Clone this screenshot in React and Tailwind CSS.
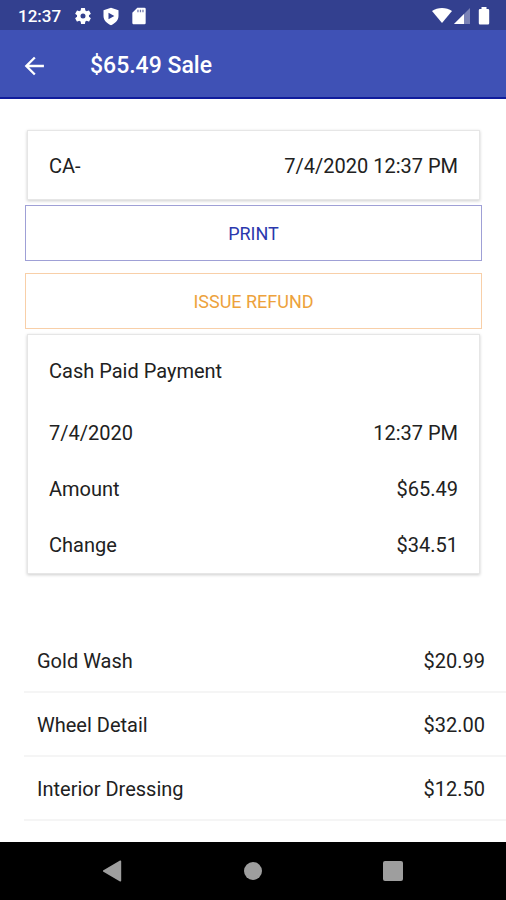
import React from "react";

const payment = [
  ["7/4/2020", "12:37 PM"],
  ["Amount", "$65.49"],
  ["Change", "$34.51"],
];

const items = [
  ["Gold Wash", "$20.99"],
  ["Wheel Detail", "$32.00"],
  ["Interior Dressing", "$12.50"],
];

function StatusBar() {
  return (
    <div className="flex h-[30px] items-center bg-[#33408f] pt-0.5 pr-4 pl-[18px] text-white">
      <span className="text-[17px] leading-5 font-medium">12:37</span>
      <div className="ml-3 flex flex-1 items-center gap-2">
        <svg className="size-5" viewBox="0 0 24 24" fill="currentColor" aria-hidden="true">
          <path d="M19.14 12.94c.04-.3.06-.61.06-.94 0-.32-.02-.64-.07-.94l2.03-1.58a.49.49 0 0 0 .12-.61l-1.92-3.32a.49.49 0 0 0-.59-.22l-2.39.96c-.5-.38-1.03-.7-1.62-.94l-.36-2.54a.48.48 0 0 0-.48-.41h-3.84a.47.47 0 0 0-.47.41l-.36 2.54c-.59.24-1.13.57-1.62.94l-2.39-.96a.48.48 0 0 0-.59.22L2.74 8.87a.48.48 0 0 0 .12.61l2.03 1.58c-.05.3-.09.63-.09.94s.02.64.07.94l-2.03 1.58a.49.49 0 0 0-.12.61l1.92 3.32c.12.22.37.29.59.22l2.39-.96c.5.38 1.03.7 1.62.94l.36 2.54c.05.24.24.41.48.41h3.84c.24 0 .44-.17.47-.41l.36-2.54c.59-.24 1.13-.56 1.62-.94l2.39.96c.22.08.47 0 .59-.22l1.92-3.32a.47.47 0 0 0-.12-.61zM12 15a3 3 0 1 1 0-6 3 3 0 0 1 0 6z" />
        </svg>
        <svg className="size-5" viewBox="0 0 24 24" fill="currentColor" aria-hidden="true">
          <path fillRule="evenodd" d="M12 2 3 5v7c0 5 3.800 8.800 9 11 5.200-2.200 9-6 9-11V5zM9 8v8l7-4z" />
        </svg>
        <svg className="size-5" viewBox="0 0 24 24" fill="currentColor" aria-hidden="true">
          <path d="M18.500 2H10L4 8v12c0 1.100.9 2 2 2h12.500a1.500 1.500 0 0 0 1.500-1.500v-17A1.500 1.500 0 0 0 18.500 2z" />
          <path d="M10 4.500h1.500v3H10zM13 4.500h1.500v3H13zM16 4.500h1.500v3H16z" fill="#7078ac" />
        </svg>
      </div>
      <div className="flex items-center">
        <svg className="h-[18px] w-5" viewBox="0 0 20 18" fill="currentColor" aria-hidden="true">
          <path d="M0 4C5.500 0 14.500 0 20 4L10 16z" />
        </svg>
        <svg className="ml-0.5 size-4" viewBox="0 0 16 16" fill="currentColor" aria-hidden="true">
          <path d="M0 16 16 0v16z" opacity=".35" />
          <path d="M0 16 10 6v10z" />
        </svg>
        <svg className="ml-2 h-[18px] w-3" viewBox="0 0 12 18" fill="currentColor" aria-hidden="true">
          <path d="M3.500 0h5v2H10a1.200 1.200 0 0 1 1.200 1.200v13.100a1.200 1.200 0 0 1-1.200 1.200H2A1.200 1.200 0 0 1 .8 16.300V3.200A1.200 1.200 0 0 1 2 2h1.500z" />
        </svg>
      </div>
    </div>
  );
}

function AppBar() {
  return (
    <header className="flex h-[69px] items-center border-b-2 border-[#101c9c] bg-[#3f51b5] pt-1 pl-5 text-white">
      <button type="button" aria-label="Back" className="flex size-7 items-center justify-center">
        <svg className="size-7" viewBox="0 0 24 24" fill="currentColor" aria-hidden="true">
          <path d="M20.500 11H7.830l5.590-5.590L12 4l-8 8 8 8 1.410-1.410L7.830 13H20.500z" />
        </svg>
      </button>
      <h1 className="ml-[42px] text-[23px] leading-8 font-medium">$65.49 Sale</h1>
    </header>
  );
}

function Card({ children }) {
  return (
    <section className="mx-[3px] border border-[#e6e6e6] bg-white px-[21px] pt-0.5 shadow-[0_1px_3px_rgba(0,0,0,0.2)]">
      {children}
    </section>
  );
}

function NavBar() {
  return (
    <nav className="flex h-[58px] items-center justify-center gap-[100px] bg-black text-[#9e9e9e]">
      <button type="button" aria-label="Back" className="flex size-10 items-center justify-center">
        <svg className="h-[22px] w-5" viewBox="0 0 20 22" fill="currentColor" aria-hidden="true">
          <path d="M17 .6c.6-.4 1.200 0 1.200.6v19.600c0 .6-.6 1-1.200.6L0 11.600a.7.7 0 0 1 0-1.200z" />
        </svg>
      </button>
      <button type="button" aria-label="Home" className="flex size-10 items-center justify-center">
        <span className="size-[18px] rounded-full bg-[#9e9e9e]" />
      </button>
      <button type="button" aria-label="Recent apps" className="flex size-10 items-center justify-center">
        <span className="size-5 rounded-xs bg-[#9e9e9e]" />
      </button>
    </nav>
  );
}

export default function App() {
  return (
    <div className="flex min-h-screen flex-col bg-white font-[Roboto,sans-serif] text-xl text-[#212121]">
      <StatusBar />
      <AppBar />
      <main className="flex-1 pt-[31px] pl-6">
        <div className="mr-[23px]">
          <Card>
            <div className="flex h-[66px] items-center justify-between">
              <span>CA-</span>
              <span>7/4/2020 12:37 PM</span>
            </div>
          </Card>
          <div className="my-[5px] flex flex-col gap-3 px-px">
            <button type="button" className="h-14 border border-[#9fa0d6] pt-0.5 text-lg text-[#2b38ad]">
              PRINT
            </button>
            <button type="button" className="h-14 border border-[#f8cfa8] pt-0.5 text-lg text-[#eda23c]">
              ISSUE REFUND
            </button>
          </div>
          <Card>
            <h2 className="flex h-[68px] items-center">Cash Paid Payment</h2>
            <dl>
              {payment.map(([label, value]) => (
                <div key={label} className="flex h-14 items-center justify-between">
                  <dt>{label}</dt>
                  <dd>{value}</dd>
                </div>
              ))}
            </dl>
          </Card>
        </div>
        <ul className="mt-[55px]">
          {items.map(([name, price]) => (
            <li
              key={name}
              className="flex h-16 items-center justify-between border-b-2 border-[#f5f5f5] pt-0.5 pr-[21px] pl-[13px]"
            >
              <span>{name}</span>
              <span>{price}</span>
            </li>
          ))}
        </ul>
      </main>
      <NavBar />
    </div>
  );
}
